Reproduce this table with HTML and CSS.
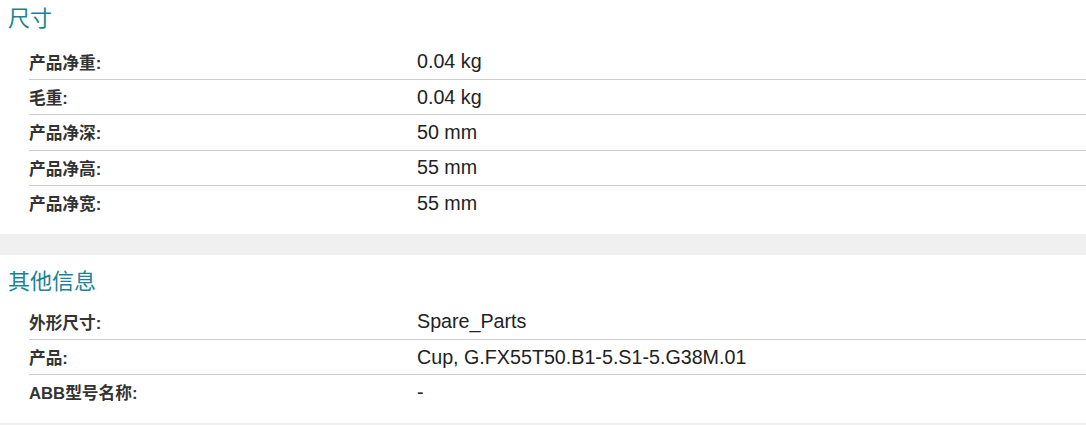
FILE: index.html
```html
<!DOCTYPE html>
<html lang="zh">
<head>
    <meta charset="UTF-8">
    <meta name="viewport" content="width=device-width, initial-scale=1.0">
    <title>产品属性</title>
    <link rel="stylesheet" href="styles.css">
</head>
<body>
    <section class="section">
        <h2>尺寸</h2>
        <div class="spec-table">
            <div class="row"><span class="label">产品净重:</span><span class="value">0.04 kg</span></div>
            <div class="row"><span class="label">毛重:</span><span class="value">0.04 kg</span></div>
            <div class="row"><span class="label">产品净深:</span><span class="value">50 mm</span></div>
            <div class="row"><span class="label">产品净高:</span><span class="value">55 mm</span></div>
            <div class="row"><span class="label">产品净宽:</span><span class="value">55 mm</span></div>
        </div>
    </section>

    <div class="divider"></div>

    <section class="section">
        <h2>其他信息</h2>
        <div class="spec-table">
            <div class="row"><span class="label">外形尺寸:</span><span class="value">Spare_Parts</span></div>
            <div class="row"><span class="label">产品:</span><span class="value">Cup, G.FX55T50.B1-5.S1-5.G38M.01</span></div>
            <div class="row"><span class="label">ABB型号名称:</span><span class="value">-</span></div>
        </div>
    </section>

    <div class="divider"></div>
</body>
</html>
```

FILE: styles.css
```css
body {
    font-family: 'Liberation Sans', 'Noto Sans CJK SC', sans-serif;
    margin: 0;
    padding: 0;
    background-color: #fff;
    color: #333;
    overflow: hidden;
}

.section {
    padding: 5px 0 13.67px;
}

.section:first-child {
    padding-top: 0;
}

.section h2 {
    margin: 0;
    padding: 4px 0 4.67px 8px;
    font-size: 22px;
    line-height: 36px;
    font-weight: normal;
    color: #1b8494;
}

.section:first-child h2 {
    padding-top: 1px;
    padding-bottom: 7.67px;
}

.spec-table {
    margin-left: 29px;
}

.row {
    display: grid;
    grid-template-columns: 388px 1fr;
    align-items: center;
    height: 34.33px;
    border-bottom: 1px solid #cdcdcd;
}

.row:last-child {
    border-bottom: none;
}

.label {
    font-size: 16.7px;
    font-weight: bold;
    color: #333;
}

.value {
    font-size: 19.7px;
    color: #222;
}

.divider {
    height: 21px;
    background-color: #f0f0f0;
}
```
